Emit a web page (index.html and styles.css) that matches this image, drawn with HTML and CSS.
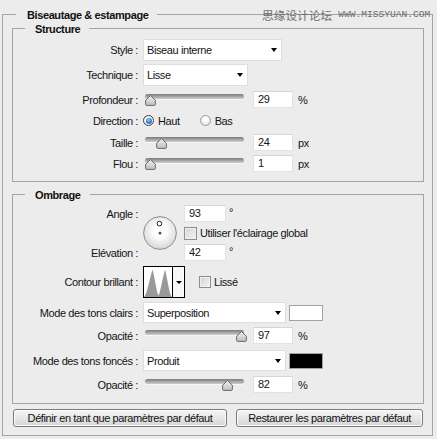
FILE: index.html
```html
<!DOCTYPE html>
<html lang="fr">
<head>
<meta charset="utf-8">
<title>Biseautage &amp; estampage</title>
<link rel="stylesheet" href="styles.css">
</head>
<body>
<div class="group outer">
  <div class="gtitle gtitle-outer">Biseautage &amp; estampage</div>

  <div class="group sub structure">
    <div class="gtitle">Structure</div>

    <div class="row row-select mt3">
      <span class="lbl">Style :</span>
      <div class="ctrl"><div class="select w-style"><span>Biseau interne</span><i class="arrow"></i></div></div>
    </div>

    <div class="row row-select mt3">
      <span class="lbl">Technique :</span>
      <div class="ctrl"><div class="select w-tech"><span>Lisse</span><i class="arrow"></i></div></div>
    </div>

    <div class="row row-slider mt5">
      <span class="lbl">Profondeur :</span>
      <div class="ctrl">
        <div class="slider"><div class="track"></div><div class="thumb" style="left:7px"><svg width="11" height="11" viewBox="0 0 11 11"><use href="#thumb"/></svg></div></div>
        <span class="num">29</span><span class="unit">%</span>
      </div>
    </div>

    <div class="row row-radio mt3">
      <span class="lbl">Direction :</span>
      <div class="ctrl">
        <span class="radio on"></span><span class="rtext">Haut</span>
        <span class="radio second"></span><span class="rtext">Bas</span>
      </div>
    </div>

    <div class="row row-slider mt4">
      <span class="lbl">Taille :</span>
      <div class="ctrl">
        <div class="slider"><div class="track"></div><div class="thumb" style="left:18px"><svg width="11" height="11" viewBox="0 0 11 11"><use href="#thumb"/></svg></div></div>
        <span class="num">24</span><span class="unit">px</span>
      </div>
    </div>

    <div class="row row-slider mt4">
      <span class="lbl">Flou :</span>
      <div class="ctrl">
        <div class="slider"><div class="track"></div><div class="thumb" style="left:7px"><svg width="11" height="11" viewBox="0 0 11 11"><use href="#thumb"/></svg></div></div>
        <span class="num">1</span><span class="unit">px</span>
      </div>
    </div>
  </div>

  <div class="group sub ombrage">
    <div class="gtitle">Ombrage</div>

    <div class="angle mt3">
      <span class="lbl a-lbl1">Angle :</span>
      <span class="lbl a-lbl2">Elévation :</span>
      <div class="dial">
        <svg width="34" height="34" viewBox="0 0 34 34">
          <defs>
            <radialGradient id="dg" cx="50%" cy="42%" r="58%">
              <stop offset="0.35" stop-color="#ffffff"/>
              <stop offset="1" stop-color="#d6d6d6"/>
            </radialGradient>
          </defs>
          <circle cx="17" cy="17" r="16.4" fill="url(#dg)" stroke="#8e8e8e" stroke-width="1"/>
          <circle cx="16.4" cy="7.6" r="2.3" fill="#fff" stroke="#1e1e1e" stroke-width="1"/>
          <circle cx="17" cy="17.2" r="1.4" fill="#505050"/>
        </svg>
      </div>
      <div class="a-in1 degwrap"><span class="num w42">93</span><span class="deg">°</span></div>
      <div class="a-cb"><span class="cb"></span><span class="cbtext">Utiliser l'éclairage global</span></div>
      <div class="a-in2 degwrap"><span class="num w42">42</span><span class="deg">°</span></div>
    </div>

    <div class="row row-contour mt5">
      <span class="lbl">Contour brillant :</span>
      <div class="ctrl">
        <div class="contour">
          <div class="cpreview">
            <svg width="28" height="30" viewBox="0 0 28 30"><path d="M0 30 C3 28 5.5 12 8.5 2.5 C11 12 13 27 14.5 28.5 C16 27 18.5 12 21 2.5 C23.5 12 25.5 28 28 30 Z" fill="#999"/></svg>
          </div>
          <div class="cdrop"><i class="arrow small"></i></div>
        </div>
        <span class="cb cb-liss"></span><span class="cbtext">Lissé</span>
      </div>
    </div>

    <div class="row row-mode mt4">
      <span class="lbl">Mode des tons clairs :</span>
      <div class="ctrl">
        <div class="select w-mode"><span>Superposition</span><i class="arrow"></i></div>
        <span class="swatch white"></span>
      </div>
    </div>

    <div class="row row-slider mt4">
      <span class="lbl">Opacité :</span>
      <div class="ctrl">
        <div class="slider"><div class="track"></div><div class="thumb" style="left:98px"><svg width="11" height="11" viewBox="0 0 11 11"><use href="#thumb"/></svg></div></div>
        <span class="num">97</span><span class="unit">%</span>
      </div>
    </div>

    <div class="row row-mode mt6">
      <span class="lbl">Mode des tons foncés :</span>
      <div class="ctrl">
        <div class="select w-mode"><span>Produit</span><i class="arrow"></i></div>
        <span class="swatch black"></span>
      </div>
    </div>

    <div class="row row-slider mt5">
      <span class="lbl">Opacité :</span>
      <div class="ctrl">
        <div class="slider"><div class="track"></div><div class="thumb" style="left:84px"><svg width="11" height="11" viewBox="0 0 11 11"><use href="#thumb"/></svg></div></div>
        <span class="num">82</span><span class="unit">%</span>
      </div>
    </div>
  </div>

  <div class="buttons">
    <span class="btn btn-def">Définir en tant que paramètres par défaut</span>
    <span class="btn btn-rest">Restaurer les paramètres par défaut</span>
  </div>
</div>

<div class="watermark"><span class="wm-cn">思缘设计论坛</span><span class="wm-en">WWW.MISSYUAN.COM</span></div>

<svg class="defs" width="0" height="0">
  <defs>
    <linearGradient id="tg" x1="0" y1="0" x2="0" y2="1">
      <stop offset="0" stop-color="#f2f2f2"/>
      <stop offset="1" stop-color="#bdbdbd"/>
    </linearGradient>
    <path id="thumb" d="M5.5 0.6 L10.4 5.2 L10.4 9.3 Q10.4 10.4 9.3 10.4 L1.7 10.4 Q0.6 10.4 0.6 9.3 L0.6 5.2 Z" fill="url(#tg)" stroke="#6a6a6a" stroke-width="1"/>
  </defs>
</svg>
</body>
</html>
```

FILE: styles.css
```css
* { box-sizing: border-box; }

html, body { margin: 0; padding: 0; }

body {
  width: 437px;
  height: 439px;
  background: #ececec;
  font-family: "Liberation Sans", Arial, sans-serif;
  font-size: 11px;
  letter-spacing: -0.4px;
  color: #141414;
  position: relative;
  overflow: hidden;
}

.defs { position: absolute; width: 0; height: 0; }

/* group boxes */
.group { border: 1px solid #a4a4a4; }

.outer {
  margin: 14px 4px 0 2px;
  padding-bottom: 8px;
}

.gtitle {
  width: max-content;
  height: 14px;
  line-height: 14px;
  margin: -7px 0 0 12px;
  padding: 0 9px 0 10px;
  background: #ececec;
  font-weight: bold;
  color: #111;
}

.gtitle-outer { margin-left: 13px; padding-left: 11px; }

.sub { margin: 6px 8px 0 9px; }
.structure { padding-bottom: 9px; }
.ombrage { margin-top: 12px; padding-bottom: 10px; }

/* rows */
.row {
  display: grid;
  grid-template-columns: 125px auto;
  column-gap: 5px;
  align-items: center;
}

.mt3 { margin-top: 3px; }
.mt4 { margin-top: 4px; }
.mt5 { margin-top: 5px; }
.mt6 { margin-top: 6px; }

.row-select { height: 22px; }
.row-slider { height: 17px; }
.row-radio { height: 19px; }
.row-contour { height: 32px; }
.row-mode { height: 21px; }

.lbl { text-align: right; white-space: nowrap; }

.ctrl { display: flex; align-items: center; height: 100%; }

/* dropdown */
.select {
  height: 100%;
  background: #fff;
  border: 1px solid #dedede;
  display: flex;
  align-items: center;
  justify-content: space-between;
  padding: 0 4px 0 3px;
}
.w-style { width: 139px; }
.w-tech { width: 105px; }
.w-mode { width: 143px; }

.arrow {
  display: block;
  width: 0;
  height: 0;
  border-left: 3.5px solid transparent;
  border-right: 3.5px solid transparent;
  border-top: 4px solid #000;
}
.arrow.small {
  border-left-width: 3px;
  border-right-width: 3px;
  border-top-width: 3px;
}

/* number fields */
.num {
  width: 40px;
  height: 17px;
  line-height: 15px;
  background: #fff;
  border: 1px solid #e2e2e2;
  border-top-color: #d6d6d6;
  padding-left: 4px;
  flex: none;
}
.w42 { width: 42px; }

.slider + .num { margin-left: 7px; }
.unit { margin-left: 5px; }

/* slider */
.slider {
  position: relative;
  width: 103px;
  height: 17px;
  flex: none;
}
.track {
  position: absolute;
  left: 2px;
  right: 2px;
  top: 3px;
  height: 5px;
  border-radius: 3px;
  background: linear-gradient(#7a7a7a, #a9a9a9 55%, #cfcfcf);
  box-shadow: 0 1px 0 #f6f6f6;
}
.thumb {
  position: absolute;
  top: 4px;
  width: 11px;
  height: 11px;
  margin-left: -5.5px;
}
.thumb svg { display: block; }

/* radios */
.radio {
  width: 11px;
  height: 11px;
  border-radius: 50%;
  border: 1px solid #9d9d9d;
  background: radial-gradient(circle at 50% 35%, #ffffff 20%, #d9d9d9 100%);
  display: flex;
  align-items: center;
  justify-content: center;
  flex: none;
}
.radio.on {
  border-color: #3c3c3c;
  background: #f4f4f4;
}
.radio.on::after {
  content: "";
  width: 6px;
  height: 6px;
  border-radius: 50%;
  background: radial-gradient(circle at 45% 35%, #9fd3f7 0, #3a8ad0 45%, #1b4f8c 100%);
}
.rtext { margin-left: 4px; }
.radio.second { margin-left: 20px; }

/* angle block */
.angle {
  display: grid;
  grid-template-columns: 125px 36px auto;
  grid-template-rows: 17px 22px 17px;
  column-gap: 5px;
  align-items: center;
}
.a-lbl1 { grid-column: 1; grid-row: 1; }
.a-lbl2 { grid-column: 1; grid-row: 3; }
.dial { grid-column: 2; grid-row: 1 / 4; align-self: center; height: 34px; }
.dial svg { display: block; }
.a-in1 { grid-column: 3; grid-row: 1; }
.a-cb { grid-column: 3; grid-row: 2; display: flex; align-items: center; }
.a-in2 { grid-column: 3; grid-row: 3; }

.degwrap { display: flex; align-items: flex-start; height: 17px; }
.deg { margin-left: 3px; line-height: 14px; }

/* checkbox */
.cb {
  width: 13px;
  height: 13px;
  border: 1px solid #8e8e8e;
  background: linear-gradient(135deg, #d2d2d2, #f5f5f5);
  box-shadow: inset 0 0 0 1px #f0f0f0;
  flex: none;
}
.cbtext { margin-left: 3px; }
.cb-liss { margin-left: 14px; width: 12px; height: 12px; }

/* contour */
.contour {
  display: flex;
  width: 42px;
  height: 32px;
  border: 1px solid #000;
  background: #fff;
}
.cpreview { width: 28px; height: 30px; }
.cpreview svg { display: block; }
.cdrop {
  width: 11px;
  border-left: 1px solid #000;
  background: #f7f7f7;
  display: flex;
  align-items: center;
  justify-content: center;
  padding-left: 1px;
}

/* swatch */
.swatch {
  width: 34px;
  height: 16px;
  margin-left: 3px;
  border: 1px solid #a2a2a2;
}
.swatch.white { background: #fff; }
.swatch.black { background: #000; }

/* buttons */
.buttons {
  display: flex;
  gap: 9px;
  margin: 5px 8px 0 10px;
}
.btn {
  height: 18px;
  line-height: 16px;
  text-align: center;
  border: 1px solid #7c7c7c;
  border-radius: 3px;
  background: linear-gradient(#f6f6f6, #e6e6e6 50%, #d6d6d6);
  box-shadow: inset 0 0 0 1px #fbfbfb;
  color: #111;
}
.btn-def { width: 214px; }
.btn-rest { width: 187px; }

/* watermark overlay */
.watermark {
  position: absolute;
  top: 7px;
  left: 262px;
  display: flex;
  align-items: center;
  color: #6c6c6c;
  letter-spacing: 0;
}
.wm-cn {
  font-family: "Noto Sans CJK SC", sans-serif;
  font-size: 11.7px;
  line-height: 14px;
}
.wm-en {
  font-family: "Liberation Mono", monospace;
  font-size: 9.6px;
  line-height: 14px;
  margin-left: 6px;
  padding-top: 1px;
}
```
